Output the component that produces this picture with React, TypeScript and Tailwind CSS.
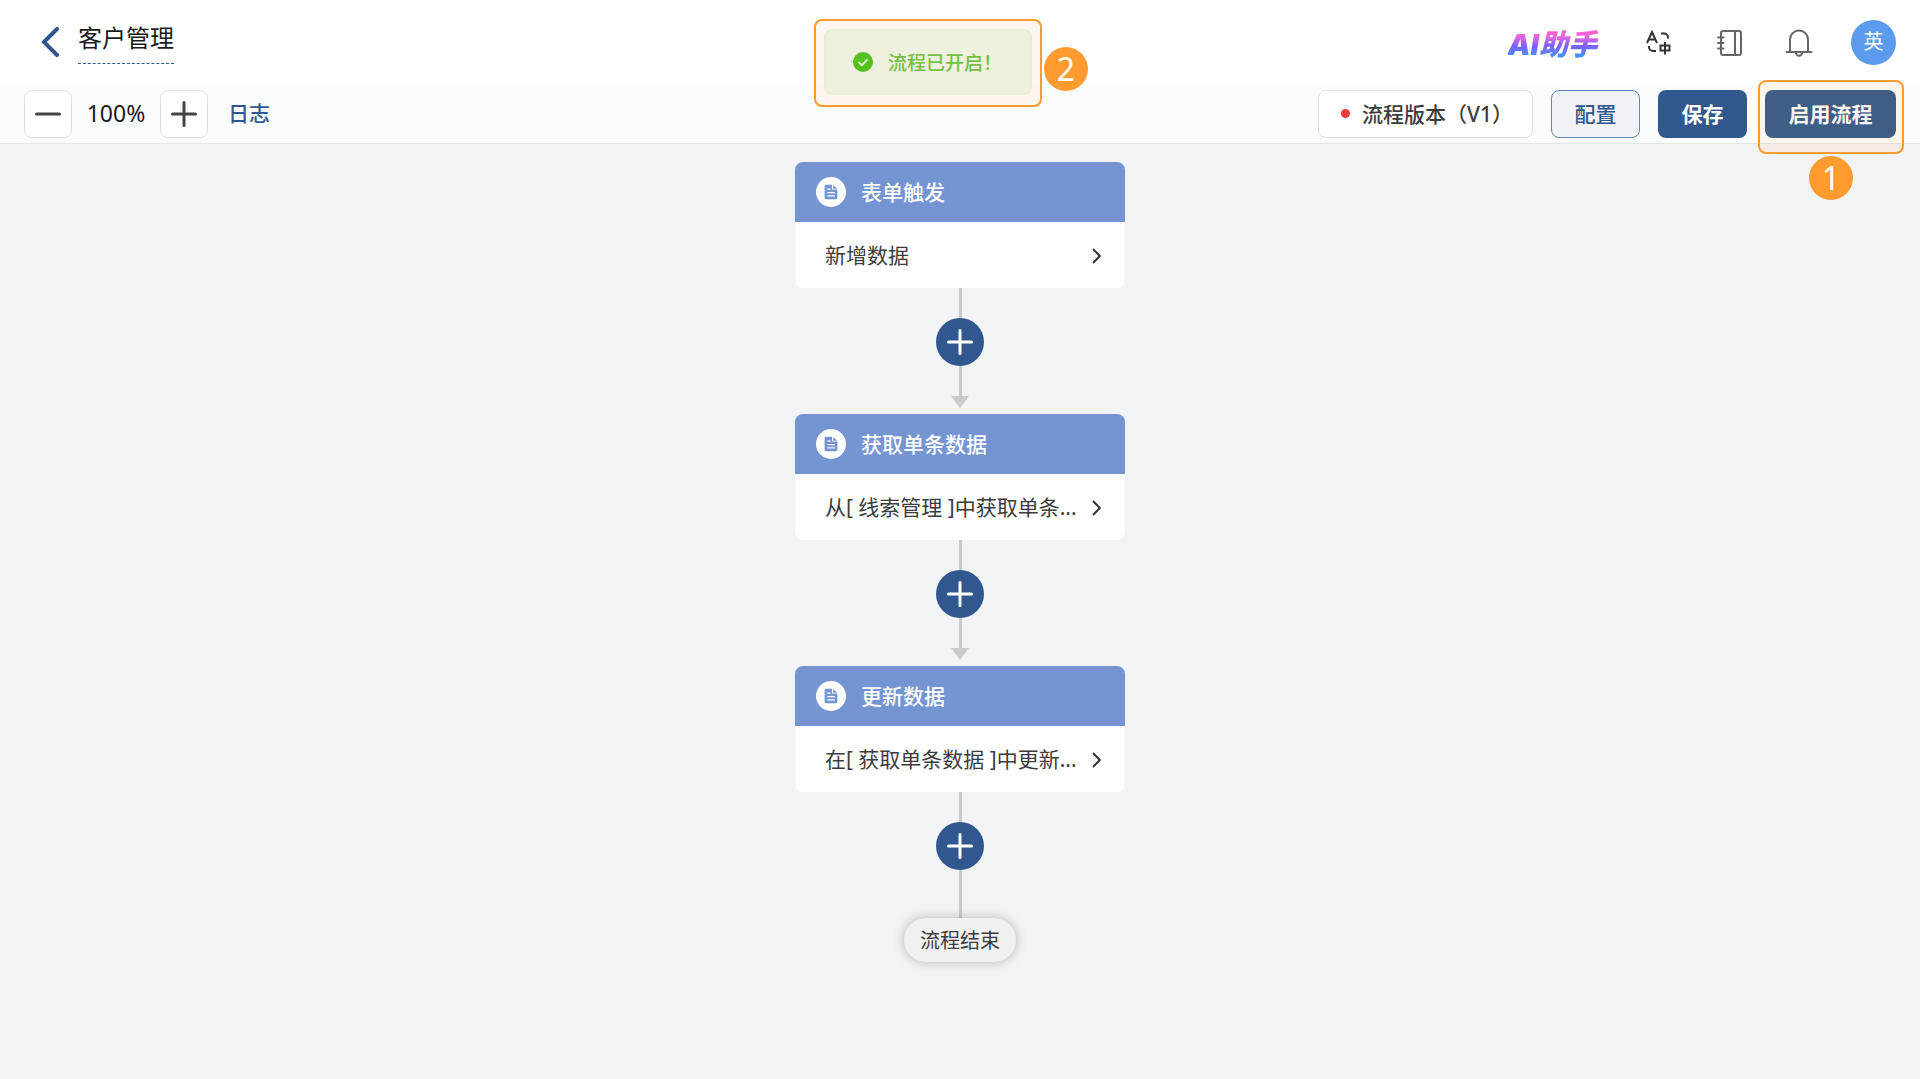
import type { ReactNode } from "react";

const flowNodes = [
  { title: "表单触发", text: "新增数据" },
  { title: "获取单条数据", text: "从[ 线索管理 ]中获取单条..." },
  { title: "更新数据", text: "在[ 获取单条数据 ]中更新..." },
];

function PlusIcon() {
  return (
    <svg width="26" height="26" viewBox="0 0 26 26" fill="none" stroke="currentColor" strokeWidth="3" strokeLinecap="round" aria-hidden="true">
      <path d="M13 1.5v23M1.5 13h23" />
    </svg>
  );
}

function DocIcon() {
  return (
    <svg width="30" height="30" viewBox="0 0 30 30" aria-hidden="true">
      <circle cx="15" cy="15" r="15" fill="#fff" />
      <path d="M10 7.8h6v4.8h5.4v8.2a1.4 1.4 0 0 1-1.4 1.4H10a1.4 1.4 0 0 1-1.4-1.4V9.2A1.4 1.4 0 0 1 10 7.8z" fill="#7595d2" />
      <path d="M17.2 8l4.2 3.8h-4.2z" fill="#7595d2" />
      <path d="M11.3 12.2h3.4M11.3 15.6h7.6M11.3 18.9h7.6" stroke="#fff" strokeWidth="1.2" />
    </svg>
  );
}

function TranslateIcon() {
  return (
    <svg width="26" height="26" viewBox="0 0 26 26" fill="none" stroke="#333" strokeWidth="2" aria-hidden="true">
      <path d="M1 13L6 2l5 11M2.7 9.5h6.6" />
      <path d="M15 3.5h3a4 4 0 0 1 4 4v1M3 16v1a4 4 0 0 0 4 4h3" />
      <path d="M14.5 15.5h9v5h-9zM19 12v12.5" />
    </svg>
  );
}

function NotebookIcon() {
  return (
    <svg width="26" height="28" viewBox="0 0 26 28" fill="none" stroke="#666" strokeWidth="2" strokeLinecap="round" aria-hidden="true">
      <rect x="5" y="2" width="20" height="24" rx="2" />
      <path d="M19 2v24M2 8.5h5.5M2 14h5.5M2 19.5h5.5" />
    </svg>
  );
}

function BellIcon() {
  return (
    <svg width="28" height="30" viewBox="0 0 28 30" fill="none" stroke="#666" strokeWidth="2" strokeLinecap="round" aria-hidden="true">
      <path d="M5 24V11.5a9 9 0 0 1 18 0V24M1.5 24h25M10.8 24.5a3.2 3.2 0 0 0 6.4 0" />
    </svg>
  );
}

function IconButton({ label, children }: { label: string; children: ReactNode }) {
  return (
    <button type="button" aria-label={label} className="flex h-10 w-7 items-center justify-center pt-0.5 cursor-pointer">
      {children}
    </button>
  );
}

function Marker({ children }: { children: ReactNode }) {
  return (
    <span className="flex size-11 items-center justify-center rounded-full bg-[#ff9b2f] text-[32px] leading-none text-white">
      {children}
    </span>
  );
}

function FlowCard({ title, text }: { title: string; text: string }) {
  return (
    <section className="w-[330px] overflow-hidden rounded-lg bg-white">
      <h2 className="flex h-15 items-center gap-[15px] bg-[#7595d2] pl-[21px] text-[21px] font-medium text-white">
        <DocIcon />
        <span className="pt-0.5">{title}</span>
      </h2>
      <button type="button" className="flex h-[66px] w-full items-center justify-between pt-0.5 pl-[30px] pr-6 text-[21px] text-[#3c3c3c] cursor-pointer">
        <span className="whitespace-nowrap">{text}</span>
        <svg width="9" height="16" viewBox="0 0 9 16" fill="none" stroke="#333" strokeWidth="2" aria-hidden="true">
          <path d="M1 1l6.8 7L1 15" />
        </svg>
      </button>
    </section>
  );
}

function Connector({ last }: { last: boolean }) {
  return (
    <div className="flex flex-col items-center">
      <div className="h-[30px] w-[3px] bg-[#cacaca]" />
      <button type="button" aria-label="添加节点" className="flex size-12 items-center justify-center rounded-full bg-[#30588e] text-white cursor-pointer">
        <PlusIcon />
      </button>
      {last ? (
        <div className="h-12 w-[3px] bg-[#cacaca]" />
      ) : (
        <>
          <div className="h-[30px] w-[3px] bg-[#cacaca]" />
          <svg width="18" height="12" viewBox="0 0 18 12" className="mb-1.5" aria-hidden="true">
            <path d="M0 0h18L9 12z" fill="#cacaca" />
          </svg>
        </>
      )}
    </div>
  );
}

function Toast() {
  return (
    <div className="absolute left-1/2 top-[19px] -ml-[146px] flex items-end gap-0.5">
      <div className="rounded-lg border-2 border-[#ff9b2f] bg-[#ff9b2f]/8 p-2 pb-2.5">
        <div role="status" className="flex h-[66px] w-52 items-center gap-[15px] rounded-lg border-2 border-[#e6f0d8] bg-[#eff1de] pl-[27px] text-[19px] font-medium text-[#73c043]">
          <svg width="20" height="20" viewBox="0 0 20 20" aria-hidden="true">
            <circle cx="10" cy="10" r="10" fill="#55c11c" />
            <path d="M5.5 10l3.3 3.3 5.7-6" fill="none" stroke="#eff1de" strokeWidth="1.8" />
          </svg>
          <span className="whitespace-nowrap pt-0.5">流程已开启！</span>
        </div>
      </div>
      <div className="pb-4">
        <Marker>2</Marker>
      </div>
    </div>
  );
}

function App() {
  return (
    <div className="relative flex min-h-screen flex-col bg-[#f1f3f5] font-['Noto_Sans','Noto_Sans_CJK_SC',sans-serif]">
      <header className="flex h-21 items-center justify-between bg-white pl-10 pr-6">
        <div className="flex items-center gap-[18px]">
          <button type="button" aria-label="返回" className="cursor-pointer">
            <svg width="20" height="30" viewBox="0 0 20 30" fill="none" stroke="#30588e" strokeWidth="4" strokeLinecap="round" aria-hidden="true">
              <path d="M17 2L4 15l13 13" />
            </svg>
          </button>
          <h1 className="h-[43px] border-b border-dashed border-[#30588e] text-2xl leading-8.5 text-[#1a1a1a]">客户管理</h1>
        </div>
        <div className="flex items-center">
          <a
            href="#assistant"
            className="mr-11 bg-linear-to-b from-[#ff5fd0] from-35% via-[#7b5cff] via-58% to-[#3c93ff] to-78% bg-clip-text pr-1 pt-1.5 font-['Inter','Noto_Sans_CJK_SC',sans-serif] text-[29px] font-black italic text-transparent"
          >
            AI助手
          </a>
          <div className="mr-[38px] flex items-center gap-[42px]">
            <IconButton label="切换语言"><TranslateIcon /></IconButton>
            <IconButton label="通讯录"><NotebookIcon /></IconButton>
            <IconButton label="通知"><BellIcon /></IconButton>
          </div>
          <button type="button" className="size-[45px] rounded-full bg-[#5c9aee] text-xl text-white cursor-pointer">英</button>
        </div>
      </header>

      <div className="flex h-15 items-center justify-between border-b border-[#e3e5e8] bg-[#fbfdfc] px-6">
        <div className="flex items-center">
          <button type="button" aria-label="缩小" className="flex size-12 items-center justify-center rounded-lg border border-[#dedfe9] bg-white text-[#444] cursor-pointer">
            <svg width="26" height="4" viewBox="0 0 26 4" aria-hidden="true">
              <path d="M1.5 2h23" stroke="currentColor" strokeWidth="3" strokeLinecap="round" />
            </svg>
          </button>
          <span className="w-22 text-center text-[23px] text-[#1a1a1a]">100%</span>
          <button type="button" aria-label="放大" className="flex size-12 items-center justify-center rounded-lg border border-[#dedfe9] bg-white text-[#444] cursor-pointer">
            <PlusIcon />
          </button>
          <a href="#log" className="ml-5 text-[21px] font-medium text-[#30588e]">日志</a>
        </div>
        <div className="flex items-center gap-[18px] text-[21px] font-medium">
          <button type="button" className="flex h-12 w-[215px] items-center gap-3 rounded-lg border border-[#dedfe9] bg-white pl-[22px] text-[#3c3c3c] cursor-pointer">
            <span className="size-[9px] rounded-full bg-[#ea3d3d]" />
            <span className="whitespace-nowrap pt-0.5">流程版本（V1）</span>
          </button>
          <button type="button" className="h-12 w-[89px] rounded-lg border border-[#6485b4] bg-[#eff3f7] pt-0.5 text-[#30588e] cursor-pointer">配置</button>
          <button type="button" className="h-12 w-[89px] rounded-lg bg-[#30588e] pt-0.5 font-bold text-white cursor-pointer">保存</button>
          <button type="button" className="h-12 w-[131px] rounded-lg bg-[#30588e] pt-0.5 font-bold text-white cursor-pointer">启用流程</button>
        </div>
      </div>

      <main className="flex flex-1 flex-col items-center pt-[18px]">
        {flowNodes.map((node, i) => (
          <div key={node.title} className="flex flex-col items-center">
            <FlowCard title={node.title} text={node.text} />
            <Connector last={i === flowNodes.length - 1} />
          </div>
        ))}
        <div className="flex h-11 items-center rounded-full bg-[#f1f1f1] px-4 pt-0.5 text-xl text-[#3c3c3c] shadow-[0_0_12px_rgba(0,0,0,0.25)]">
          流程结束
        </div>
      </main>

      <Toast />

      {/* Step 1 highlight */}
      <div className="pointer-events-none absolute right-4 top-20 flex flex-col items-center gap-0.5">
        <div className="h-[74px] w-[146px] rounded-lg border-2 border-[#ff9b2f] bg-[#ff9b2f]/8" />
        <Marker>1</Marker>
      </div>
    </div>
  );
}

export default App;
